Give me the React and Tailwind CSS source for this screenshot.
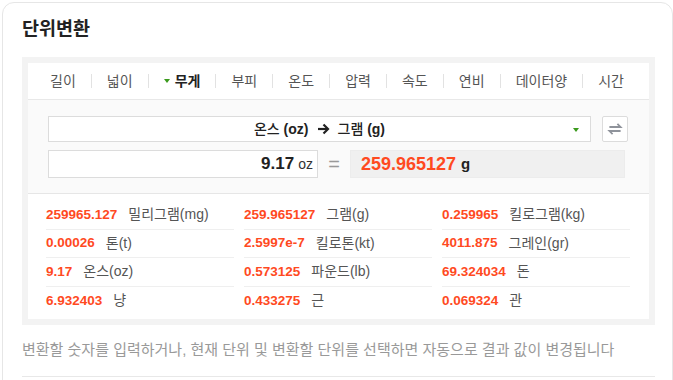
import React from 'react';

const FONT = { fontFamily: '"Liberation Sans", Arial, "Noto Sans CJK KR", sans-serif' };

const tabs = ['길이', '넓이', '무게', '부피', '온도', '압력', '속도', '연비', '데이터양', '시간'];

const results = [
  ['259965.127', '밀리그램', '(mg)'],
  ['259.965127', '그램', '(g)'],
  ['0.259965', '킬로그램', '(kg)'],
  ['0.00026', '톤', '(t)'],
  ['2.5997e-7', '킬로톤', '(kt)'],
  ['4011.875', '그레인', '(gr)'],
  ['9.17', '온스', '(oz)'],
  ['0.573125', '파운드', '(lb)'],
  ['69.324034', '돈', ''],
  ['6.932403', '냥', ''],
  ['0.433275', '근', ''],
  ['0.069324', '관', ''],
];

const SwapIcon = () => (
  <svg width="16" height="16" viewBox="0 0 20 20" fill="none" stroke="#8f939b" strokeWidth="2.2">
    <path d="M3 7.5 H17 L13 3.5" />
    <path d="M17 12.5 H3 L7 16.5" />
  </svg>
);

const Arrow = () => (
  <svg width="13" height="12" viewBox="0 0 13 12" fill="none" stroke="#222" strokeWidth="2.2" className="mx-[8px]">
    <path d="M1 6 H11" />
    <path d="M6.5 1.5 L11 6 L6.5 10.5" />
  </svg>
);

const App = () => {
  return (
    <div className="w-[673px] h-[380px] bg-white overflow-hidden pt-[2px] pl-[2px]" style={FONT}>
      <div className="h-[400px] border border-[#e6e6e6] rounded-[12px] pt-[13px] pl-[19px] pr-[17px]">
        {/* Title */}
        <h1 className="text-[18.5px] leading-[26px] font-bold text-[#222] mb-[15px]">단위변환</h1>

        {/* Converter panel */}
        <div className="bg-[#f3f3f3] p-[6px]">
          <div className="bg-white">
            {/* Tabs */}
            <div className="h-[37px] border-b border-[#e8e8e8] flex items-center justify-between pl-[22px] pr-[25px] text-[14px] text-[#555]">
              {tabs.map((t, i) => (
                <React.Fragment key={t}>
                  {i > 0 && <span className="w-px h-[14px] bg-[#e2e2e2]" />}
                  {t === '무게' ? (
                    <span className="flex items-center font-bold text-[#222]">
                      <span className="w-0 h-0 border-l-[3px] border-r-[3px] border-t-[4px] border-l-transparent border-r-transparent border-t-[#3a9a1c] mr-[5px]" />
                      {t}
                    </span>
                  ) : (
                    <span>{t}</span>
                  )}
                </React.Fragment>
              ))}
            </div>

            {/* Select + input */}
            <div className="bg-[#fafafa] border-b border-[#e6e6e6] pt-[16px] pb-[15px] pl-[20px] pr-[21px]">
              <div className="flex gap-[11px]">
                <div className="flex-1 h-[26px] bg-white border border-[#dcdcdc] flex items-center justify-center relative text-[14px] text-[#222]">
                  <span className="font-medium">온스 <span className="font-bold">(oz)</span></span>
                  <Arrow />
                  <span className="font-medium">그램 <span className="font-bold">(g)</span></span>
                  <span className="absolute right-[11px] top-[11px] w-0 h-0 border-l-[3px] border-r-[3px] border-t-[4px] border-l-transparent border-r-transparent border-t-[#3a9a1c]" />
                </div>
                <div className="w-[26px] h-[26px] bg-white border border-[#dcdcdc] rounded-[2px] flex items-center justify-center">
                  <SwapIcon />
                </div>
              </div>
              <div className="flex items-center mt-[8px]">
                <div className="w-[270px] h-[28px] bg-white border border-[#dcdcdc] flex items-center justify-end pr-[4px]">
                  <span className="text-[17px] font-bold text-[#222]">9.17</span>
                  <span className="text-[14px] text-[#333] ml-[4px]">oz</span>
                </div>
                <span className="w-[32px] text-center text-[20px] text-[#999] leading-none">=</span>
                <div className="w-[275px] h-[28px] bg-[#f0f0f0] border border-[#ececec] flex items-center pl-[10px]">
                  <span className="text-[18px] font-bold text-[#ff4a1f]">259.965127</span>
                  <span className="text-[15px] font-bold text-[#222] ml-[5px]">g</span>
                </div>
              </div>
            </div>

            {/* Results */}
            <div className="grid grid-cols-3 gap-x-[10px] pl-[18px] pr-[19px] pt-[7px] pb-[4px]">
              {results.map(([num, label, unit], i) => (
                <div
                  key={label}
                  className={`h-[28.5px] flex items-center ${i < 9 ? 'border-b border-[#efefef]' : ''}`}
                >
                  <span className="text-[13.5px] font-bold text-[#ff4a1f]">{num}</span>
                  <span className="ml-[11px] text-[14px] text-[#555]">{label}{unit}</span>
                </div>
              ))}
            </div>
          </div>
        </div>

        {/* Hint */}
        <p className="mt-[15px] text-[15px] leading-[20px] text-[#999]">
          변환할 숫자를 입력하거나, 현재 단위 및 변환할 단위를 선택하면 자동으로 결과 값이 변경됩니다
        </p>
        <div className="mt-[16px] border-t border-[#e8e8e8]" />
      </div>
    </div>
  );
};

export default App;
